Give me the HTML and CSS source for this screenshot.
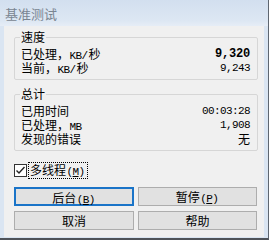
FILE: index.html
```html
<!DOCTYPE html>
<html lang="zh-CN">

<head>
  <meta charset="UTF-8">
  <title>基准测试</title>
  <link rel="stylesheet" href="styles.css">
</head>

<body>
  <div class="window">
    <div class="titlebar">基准测试</div>
    <div class="frame">
      <div class="client">
        <fieldset class="group">
          <legend>速度</legend>
          <div class="row"><span>已处理，<span class="mono">KB/</span>秒</span><span class="mono bold">9,320</span></div>
          <div class="row"><span>当前，<span class="mono">KB/</span>秒</span><span class="mono">9,243</span></div>
        </fieldset>

        <fieldset class="group totals">
          <legend>总计</legend>
          <div class="row"><span>已用时间</span><span class="mono">00:03:28</span></div>
          <div class="row"><span>已处理，<span class="mono">MB</span></span><span class="mono">1,908</span></div>
          <div class="row"><span>发现的错误</span><span>无</span></div>
        </fieldset>

        <label class="check">
          <span class="box">
            <svg width="11" height="11" viewBox="0 0 11 11"><polyline points="1.5,5.5 4,8 9.5,2" fill="none" stroke="#222" stroke-width="1.4"/></svg>
          </span>
          <span class="focus">多线程<span class="mono">(<u>M</u>)</span></span>
        </label>

        <div class="buttons">
          <button class="btn default">后台<span class="mono">(<u>B</u>)</span></button>
          <button class="btn">暂停<span class="mono">(<u>P</u>)</span></button>
          <button class="btn">取消</button>
          <button class="btn">帮助</button>
        </div>
      </div>
    </div>
  </div>
</body>

</html>
```

FILE: styles.css
```css
body {
  margin: 0;
  padding: 0;
  font-family: "Noto Sans CJK SC", sans-serif;
  font-size: 12px;
  background-color: #f0f0f0;
}

.window {
  width: 269px;
  height: 240px;
  display: flex;
  flex-direction: column;
  background-color: #dae5f2;
  border-right: 1px solid #5e6670;
  border-bottom: 2px solid #4f5359;
  box-sizing: border-box;
}

.titlebar {
  height: 26px;
  line-height: 27px;
  padding-left: 5px;
  font-size: 13px;
  color: #7a8591;
  background: linear-gradient(#d2dfef, #dde7f3 80%, #e6edf6);
  flex-shrink: 0;
}

.frame {
  flex: 1;
  padding: 0 4px 1px 4px;
  display: flex;
}

.client {
  flex: 1;
  background-color: #f0f0f0;
  padding: 5px 6px 0 10px;
  color: #000;
}

.group {
  margin: 0;
  padding: 4px 0 4px 0;
  border: 1px solid #d6d6d6;
  border-radius: 2px;
}

.group legend {
  margin-left: 5px;
  padding: 0 1px;
  line-height: 12px;
  height: 12px;
}

.totals {
  margin-top: 8px;
}

.row {
  display: flex;
  justify-content: space-between;
  align-items: center;
  height: 14px;
  line-height: 14px;
  padding: 0 7px 0 6px;
}

.mono {
  font-family: "Liberation Mono", monospace;
  font-size: 11px;
  line-height: 12px;
  letter-spacing: -0.6px;
  margin: 0 1px 0 0.5px;
}

.row > .mono {
  margin: 0;
}

.bold {
  font-weight: bold;
  font-size: 12px;
  letter-spacing: -0.2px;
}

.check {
  display: flex;
  align-items: center;
  gap: 2px;
  margin-top: 13px;
  height: 13px;
}

.box {
  width: 11px;
  height: 11px;
  border: 1px solid #333;
  background-color: #fff;
  display: flex;
}

.focus {
  outline: 1px dotted #000;
  outline-offset: 0;
  line-height: 14px;
  padding: 0 1px;
}

.buttons {
  display: grid;
  grid-template-columns: 120px 119px;
  column-gap: 4px;
  row-gap: 5px;
  margin-top: 10px;
}

.btn {
  height: 19px;
  padding: 0;
  font-family: "Noto Sans CJK SC", sans-serif;
  font-size: 12px;
  color: #000;
  background-color: #e1e1e1;
  border: 1px solid #adadad;
}

.btn.default {
  border: 2px solid #1a74c8;
}
```
